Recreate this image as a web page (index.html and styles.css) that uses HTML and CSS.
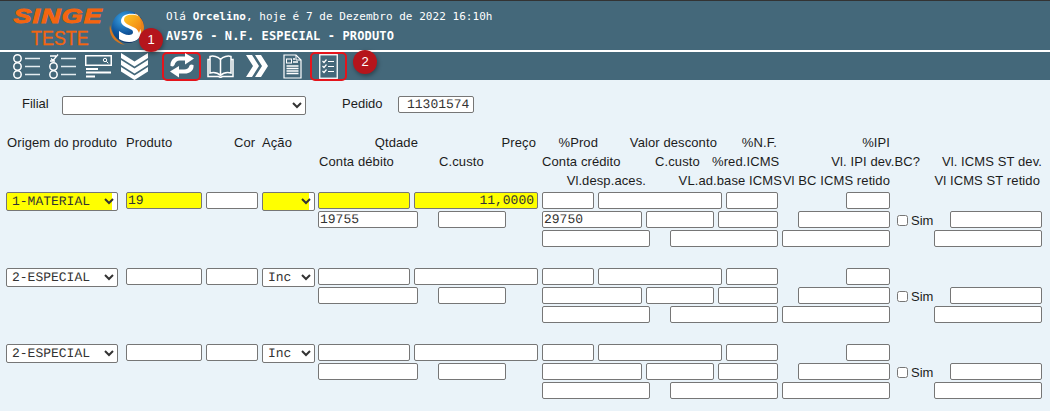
FILE: index.html
```html
<!DOCTYPE html>
<html lang="pt-BR">
<head>
<meta charset="utf-8">
<title>AV576 - N.F. ESPECIAL - PRODUTO</title>
<link rel="stylesheet" href="styles.css">
</head>
<body>
<header class="top">
  <div class="brand">
    <div class="logo"><span class="logo-singe">SINGE</span><span class="logo-teste">TESTE</span></div>
    <svg class="sphere" width="38" height="36" viewBox="0 0 38 36">
      <defs>
        <radialGradient id="sph" cx="35%" cy="25%" r="80%"><stop offset="0" stop-color="#3aa4e6"/><stop offset=".55" stop-color="#11589f"/><stop offset="1" stop-color="#0a2c5e"/></radialGradient>
        <linearGradient id="ess" x1="0" y1="0" x2="1" y2="1"><stop offset="0" stop-color="#ffc924"/><stop offset="1" stop-color="#ef7d12"/></linearGradient>
      </defs>
      <path d="M2 15C0 24 6 33 17 35 9 31 4 25 2 15z" fill="#d9761c"/>
      <circle cx="20" cy="17" r="16" fill="url(#sph)"/>
      <path d="M27 3c5 3 9 8 9 14 0 6-2 9-4 12-1-8-2-15-5-26z" fill="#e8831b"/>
      <path d="M30 5C23 2 13 4 13 11c0 5 6 6 11 9 2 2 1 5-3 5-4 0-7-2-10-4v8c6 4 16 4 20-1 4-5 2-12-6-15-3-1-5-2-5-4 0-1 4-2 10 0z" fill="#fff"/>
      <path d="M31 6c-7-2-15-2-15 4 0 3 5 5 9 7 3 1 5 3 6 6 2-4 3-12 0-17z" fill="url(#ess)"/>
    </svg>
    <div class="greet">
      <p class="hello">Olá <b>Orcelino</b>, hoje é 7 de Dezembro de 2022 16:10h</p>
      <p class="title">AV576 - N.F. ESPECIAL - PRODUTO</p>
    </div>
  </div>
  <nav class="toolbar">
    <svg class="ic ic-a" width="28" height="25" viewBox="0 0 28 25" fill="none" stroke="#fff" stroke-width="1.5">
      <circle cx="5.500" cy="4.500" r="3.700"/><circle cx="5.500" cy="12.500" r="3.700"/><circle cx="5.500" cy="20.500" r="3.700"/>
      <path d="M13 4.500h15M13 12.500h15M13 20.500h15" stroke="#e4ecf0" stroke-width="1.600"/>
    </svg>
    <svg class="ic ic-b" width="28" height="25" viewBox="0 0 28 25" fill="none" stroke="#fff" stroke-width="1.500">
      <path d="M2 2h6M2 7h5M3 4.500l2 2 5-6" stroke-width="1.300"/><circle cx="5.500" cy="12.500" r="3.700"/><circle cx="5.500" cy="20.500" r="3.700"/>
      <path d="M13 4.500h15M13 12.500h15M13 20.500h15" stroke="#e4ecf0" stroke-width="1.600"/>
    </svg>
    <svg class="ic ic-c" width="27" height="25" viewBox="0 0 27 25" fill="none" stroke="#fff">
      <rect x=".75" y="1.750" width="25.500" height="9.500" stroke-width="1.500"/>
      <circle cx="20" cy="6" r="1.700" stroke-width="1"/><path d="M21.300 7.300l2 2" stroke-width="1"/>
      <path d="M1 15h12M1 18.500h25M1 22.500h9" stroke-width="1.800"/>
    </svg>
    <svg class="ic ic-d" width="27" height="27" viewBox="0 0 27 27" fill="#fff">
      <path d="M0 0l13.500 8.500L27 0v5L13.500 13.500 0 5z"/><path d="M0 7l13.500 8.500L27 7v5L13.500 20.500 0 12z"/><path d="M0 14l13.500 8.500L27 14v4.500L13.500 27 0 18.500z"/>
    </svg>
    <div class="hl hl-sync">
      <svg width="26" height="26" viewBox="0 0 26 26" fill="#fff">
        <path d="M1.500 13V11C2 7 5.500 3.500 10 3.500h8v4h-7c-3 0-5 2-5.500 4.500L4 13.500z"/>
        <path d="M16 0l9 5.500-9 6z"/>
        <path d="M24.500 12v2C24 18 20.500 20.500 16 20.500H8v-4h7c3 0 5-1.500 5.500-4l1.500-1z"/>
        <path d="M10 13l-9 5.500 9 6z"/>
      </svg>
    </div>
    <svg class="ic ic-book" width="27" height="23" viewBox="0 0 27 23" fill="none" stroke="#fff" stroke-width="1.500">
      <path d="M13.500 4.500C11 1.500 6 .5 3 1.500v16.500c4-1 8 0 10.500 2.500 2.500-2.500 6.500-3.500 10.500-2.500V1.500C21 .5 16 1.500 13.500 4.500zM13.500 4.500v16"/>
      <path d="M3 4.500H1v17h10.500l2 1 2-1H26v-17h-2"/>
    </svg>
    <svg class="ic ic-chev" width="22" height="22" viewBox="0 0 22 22" fill="#fff">
      <path d="M0 0h6l7 11-7 11H0l7-11z"/><path d="M9 0h6l7 11-7 11H9l7-11z"/>
    </svg>
    <svg class="ic ic-doc" width="19" height="25" viewBox="0 0 19 25" fill="none" stroke="#fff">
      <path d="M1 1h12l5 5v18H1z" stroke-width="1.200"/><path d="M13 1v5h5" stroke-width="1"/>
      <rect x="3.500" y="5" width="5" height="4" stroke-width="1"/>
      <path d="M10 5h2M10 8h5M3.500 12h12M3.500 14.500h12M3.500 17h12M3.500 19.500h12" stroke-width="1.300"/>
    </svg>
    <div class="hl hl-check">
      <svg width="19" height="25" viewBox="0 0 19 25" fill="none" stroke="#fff">
        <rect x=".75" y=".75" width="17.500" height="23.500" stroke-width="1.300"/>
        <path d="M3.500 7l1.500 1.500L7.500 5.500M3.500 12l1.500 1.500 2.500-3M3.500 17l1.500 1.500 2.500-3" stroke-width="1.200"/>
        <path d="M9 7.500h6M9 12.500h6M9 17.500h6" stroke-width="1.200"/>
      </svg>
    </div>
  </nav>
  <span class="badge badge-1">1</span>
  <span class="badge badge-2">2</span>
</header>

<main class="form">
  <div class="head-row">
    <label class="lb-filial">Filial</label>
    <select class="sel-filial" aria-label="Filial"><option></option></select>
    <label class="lb-pedido">Pedido</label>
    <input class="in-pedido" value="11301574" aria-label="Pedido">
  </div>

  <div class="labels labels-1">
    <span class="t-origem">Origem do produto</span>
    <span class="t-produto">Produto</span>
    <span class="t-cor">Cor</span>
    <span class="t-acao">Ação</span>
    <span class="t-qtd">Qtdade</span>
    <span class="t-preco">Preço</span>
    <span class="t-prod">%Prod</span>
    <span class="t-desc">Valor desconto</span>
    <span class="t-nf">%N.F.</span>
    <span class="t-ipi">%IPI</span>
  </div>
  <div class="labels labels-2">
    <span class="t-debito">Conta débito</span>
    <span class="t-ccusto">C.custo</span>
    <span class="t-credito">Conta crédito</span>
    <span class="t-ccusto2">C.custo</span>
    <span class="t-red">%red.ICMS</span>
    <span class="t-ipidev">Vl. IPI dev.BC?</span>
    <span class="t-stdev">Vl. ICMS ST dev.</span>
  </div>
  <div class="labels labels-3">
    <span class="t-desp">Vl.desp.aces.</span>
    <span class="t-adbase">VL.ad.base ICMS</span>
    <span class="t-bc">Vl BC ICMS retido</span>
    <span class="t-stret">Vl ICMS ST retido</span>
  </div>

  <section class="item item-first">
    <div class="line">
      <select class="f-origem req"><option>1-MATERIAL</option><option>2-ESPECIAL</option></select>
      <input class="f-produto req" value="19">
      <input class="f-cor">
      <select class="f-acao req"><option></option><option>Inc</option></select>
      <input class="f-qtd req">
      <input class="f-preco req" value="11,0000">
      <input class="f-prod">
      <input class="f-desc">
      <input class="f-nf">
      <input class="f-ipi">
    </div>
    <div class="line">
      <input class="f-debito" value="19755">
      <input class="f-ccusto">
      <input class="f-credito" value="29750">
      <input class="f-ccusto2">
      <input class="f-red">
      <input class="f-ipidev">
      <label class="sim"><input type="checkbox">Sim</label>
      <input class="f-stdev">
    </div>
    <div class="line">
      <input class="f-desp">
      <input class="f-adbase">
      <input class="f-bc">
      <input class="f-stret">
    </div>
  </section>

  <section class="item">
    <div class="line">
      <select class="f-origem"><option>2-ESPECIAL</option></select>
      <input class="f-produto">
      <input class="f-cor">
      <select class="f-acao"><option>Inc</option></select>
      <input class="f-qtd">
      <input class="f-preco">
      <input class="f-prod">
      <input class="f-desc">
      <input class="f-nf">
      <input class="f-ipi">
    </div>
    <div class="line">
      <input class="f-debito">
      <input class="f-ccusto">
      <input class="f-credito">
      <input class="f-ccusto2">
      <input class="f-red">
      <input class="f-ipidev">
      <label class="sim"><input type="checkbox">Sim</label>
      <input class="f-stdev">
    </div>
    <div class="line">
      <input class="f-desp">
      <input class="f-adbase">
      <input class="f-bc">
      <input class="f-stret">
    </div>
  </section>

  <section class="item">
    <div class="line">
      <select class="f-origem"><option>2-ESPECIAL</option></select>
      <input class="f-produto">
      <input class="f-cor">
      <select class="f-acao"><option>Inc</option></select>
      <input class="f-qtd">
      <input class="f-preco">
      <input class="f-prod">
      <input class="f-desc">
      <input class="f-nf">
      <input class="f-ipi">
    </div>
    <div class="line">
      <input class="f-debito">
      <input class="f-ccusto">
      <input class="f-credito">
      <input class="f-ccusto2">
      <input class="f-red">
      <input class="f-ipidev">
      <label class="sim"><input type="checkbox">Sim</label>
      <input class="f-stdev">
    </div>
    <div class="line">
      <input class="f-desp">
      <input class="f-adbase">
      <input class="f-bc">
      <input class="f-stret">
    </div>
  </section>
</main>
</body>
</html>
```
FILE: styles.css
```css
* { box-sizing: border-box; }
html, body { margin: 0; height: 411px; overflow: hidden; }
body { background: #eaf3f9; font-family: "Liberation Sans", Arial, sans-serif; font-size: 13px; color: #1c1c1c; }
p { margin: 0; }

.top { position: relative; height: 80px; background: #44687a; border-top: 1px solid #333; }
.brand { display: flex; height: 49px; }
.logo { display: flex; flex-direction: column; align-items: center; width: 91px; margin-left: 13px; color: #f4650f; }
.logo-singe { font-weight: 700; font-style: italic; font-size: 21px; line-height: 18px; margin-top: 6px; letter-spacing: 1px; -webkit-text-stroke: 1px #f4650f; transform: scaleX(1.27); }
.logo-teste { font-size: 21px; line-height: 18px; margin-top: 4px; margin-left: 2px; -webkit-text-stroke: .3px #f4650f; transform: scaleX(.85); }
.sphere { margin: 9px 0 0 4px; flex: none; }
.greet { margin-left: 20px; font-family: "DejaVu Sans Mono", monospace; color: #fff; }
.hello { font-size: 11px; line-height: 14px; margin-top: 9px; letter-spacing: .04px; }
.title { font-size: 12px; line-height: 14px; margin-top: 5px; font-weight: 700; letter-spacing: .13px; }

.toolbar { display: flex; align-items: center; height: 30px; border-top: 2px solid #fff; }
.ic { flex: none; }
.ic-a { margin-left: 12px; }
.ic-b { margin-left: 8px; }
.ic-c { margin-left: 9px; }
.ic-d { margin-left: 9px; }
.hl { flex: none; display: flex; align-items: center; justify-content: center; height: 29px; border: 2px solid #e4141b; border-radius: 5px; }
.hl-sync { width: 39px; margin-left: 14px; }
.ic-book { margin-left: 6px; }
.ic-chev { margin-left: 12px; }
.ic-doc { margin-left: 15px; }
.hl-check { width: 37px; margin-left: 8px; }

.badge { position: absolute; width: 24px; height: 24px; border-radius: 50%; background: #b5151c; color: #fff; font-size: 13px; line-height: 24px; text-align: center; box-shadow: 1px 2px 4px rgba(0,0,0,.35); }
.badge-1 { left: 139px; top: 27px; }
.badge-2 { left: 353px; top: 49px; }

/* form */
.head-row { display: flex; align-items: flex-start; height: 30px; padding-top: 17px; }
.lb-filial { margin-left: 22px; width: 40px; line-height: 14px; }
.sel-filial { width: 244px; height: 19px; margin-top: -1px; }
.lb-pedido { margin-left: 36px; width: 56px; line-height: 14px; }
.in-pedido { width: 76px; height: 17px; padding: 0 1px 1px 8px; margin-top: -1px; }
select, input { font-family: "Liberation Mono", "Courier New", monospace; font-size: 13px; color: #333; background-color: #fff; border: 1px solid #767676; border-radius: 2px; margin: 0; outline: 0; text-rendering: geometricPrecision; }
input { padding: 0 1px 1px; }
select { padding: 0 0 0 1px; }

.labels { display: flex; height: 19px; line-height: 19px; white-space: nowrap; letter-spacing: .1px; }
.labels span { flex: none; }
.labels-1 { margin-top: 23px; }

.t-origem { width: 119px; margin-left: 7px; }
.t-produto { width: 108px; }
.t-cor { width: 28px; }
.t-acao { width: 90px; }
.t-qtd { width: 66px; text-align: right; }
.t-preco { width: 118px; text-align: right; }
.t-prod { width: 62px; text-align: right; }
.t-desc { width: 119px; text-align: right; }
.t-nf { width: 60px; text-align: right; }
.t-ipi { width: 113px; text-align: right; }

.t-debito { margin-left: 319px; width: 120px; }
.t-ccusto { width: 103px; }
.t-credito { width: 113px; }
.t-ccusto2 { width: 57px; }
.t-red { width: 66px; text-align: right; }
.t-ipidev { width: 142px; text-align: right; }
.t-stdev { width: 122px; text-align: right; }

.t-desp { margin-left: 556px; width: 90px; text-align: right; }
.t-adbase { width: 136px; text-align: right; }
.t-bc { width: 108px; text-align: right; }
.t-stret { width: 150px; text-align: right; }

.item { margin-top: 19px; height: 57px; }
.item-first { margin-top: 2px; }
.line { display: flex; align-items: flex-start; height: 19px; }
.line input:not([type]) { height: 17px; flex: none; }
.line select { height: 19px; flex: none; }

.f-origem { width: 112px; margin-left: 6px; }
.f-produto { width: 76px; margin-left: 8px; }
.f-cor { width: 52px; margin-left: 4px; }
.f-acao { width: 53px; margin-left: 4px; }
.f-qtd { width: 92px; margin-left: 3px; }
.f-preco { width: 124px; margin-left: 4px; text-align: right; padding-right: 3px; }
.f-prod { width: 52px; margin-left: 4px; }
.f-desc { width: 124px; margin-left: 4px; }
.f-nf { width: 52px; margin-left: 4px; }
.f-ipi { width: 44px; margin-left: 68px; }

.f-debito { width: 100px; margin-left: 318px; }
.f-ccusto { width: 68px; margin-left: 20px; }
.f-credito { width: 100px; margin-left: 36px; }
.f-ccusto2 { width: 68px; margin-left: 4px; }
.f-red { width: 60px; margin-left: 4px; }
.f-ipidev { width: 92px; margin-left: 20px; }
.sim { display: flex; align-items: center; width: 53px; height: 18px; margin-left: 7px; font-size: 13px; }
.sim input { width: 11px; height: 11px; margin: 0 3px 0 0; flex: none; }
.f-stdev { width: 92px; }

.f-desp { width: 108px; margin-left: 542px; }
.f-adbase { width: 108px; margin-left: 20px; }
.f-bc { width: 108px; margin-left: 4px; }
.f-stret { width: 108px; margin-left: 44px; }

input.req { background-color: #ff0; }
select.req { background: linear-gradient(90deg, #ff0 calc(100% - 5px), #fff calc(100% - 5px)); }
```
